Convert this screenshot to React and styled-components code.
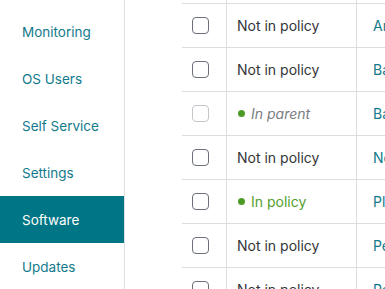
import React from "react";
import styled, { createGlobalStyle } from "styled-components";

const Global = createGlobalStyle`
  html, body { margin: 0; padding: 0; background: #fff; }
  body { font-family: Inter, "Noto Sans", sans-serif; overflow: hidden; }
  * { box-sizing: border-box; }
`;

const Page = styled.div`
  display: flex;
  height: 289px;
  width: 385px;
  overflow: hidden;
`;

const Sidebar = styled.nav`
  flex: 0 0 125px;
  border-right: 1px solid #dfe0e3;
  padding-top: 8px;
  display: flex;
  flex-direction: column;
`;

const NavItem = styled.div`
  height: 47px;
  flex: 0 0 47px;
  display: flex;
  align-items: center;
  padding-left: 22px;
  font-size: 13.5px;
  color: ${(p) => (p.$active ? "#ffffff" : "#137a8b")};
  background: ${(p) => (p.$active ? "#007585" : "transparent")};
`;

const Main = styled.main`
  flex: 1;
  padding-left: 57px;
  overflow: hidden;
`;

const Table = styled.div`
  display: grid;
  grid-template-columns: 45px 130px 120px;
  width: 295px;
`;

const Cell = styled.div`
  height: ${(p) => (p.$top ? "4px" : "44px")};
  border-bottom: 1px solid #dcdde1;
  border-right: ${(p) => (p.$last ? "none" : "1px solid #dcdde1")};
  display: flex;
  align-items: center;
  font-size: 14px;
  white-space: nowrap;
  overflow: hidden;
`;

const CheckCell = styled(Cell)`
  justify-content: flex-start;
  padding-left: 10px;
`;

const StatusCell = styled(Cell)`
  padding-left: 10px;
  color: ${(p) =>
    p.$kind === "policy" ? "#55a02c" : p.$kind === "parent" ? "#7a7c82" : "#333538"};
  font-style: ${(p) => (p.$kind === "parent" ? "italic" : "normal")};
`;

const NameCell = styled(Cell)`
  padding-left: 16px;
  color: #137a8b;
`;

const Box = styled.span`
  width: 17px;
  height: 17px;
  border-radius: 4px;
  border: 1.5px solid ${(p) => (p.$disabled ? "#c4c6cc" : "#6b7079")};
  background: #fff;
`;

const Dot = styled.span`
  width: 7px;
  height: 7px;
  border-radius: 50%;
  background: #4f9a26;
  margin: 0 6px 0 1px;
`;

const nav = ["Monitoring", "OS Users", "Self Service", "Settings", "Software", "Updates"];

const rows = [
  { status: "none", name: "Arduino IDE" },
  { status: "none", name: "Balsamiq" },
  { status: "parent", name: "Backblaze" },
  { status: "none", name: "Notion" },
  { status: "policy", name: "Plex" },
  { status: "none", name: "Pencil" },
  { status: "none", name: "Postman" },
];

const label = { none: "Not in policy", parent: "In parent", policy: "In policy" };

export default function App() {
  return (
    <>
      <Global />
      <Page>
        <Sidebar>
          {nav.map((n) => (
            <NavItem key={n} $active={n === "Software"}>
              {n}
            </NavItem>
          ))}
        </Sidebar>
        <Main>
          <Table>
            <Cell $top />
            <Cell $top />
            <Cell $top $last />
            {rows.map((r, i) => (
              <React.Fragment key={i}>
                <CheckCell>
                  <Box $disabled={r.status === "parent"} />
                </CheckCell>
                <StatusCell $kind={r.status}>
                  {r.status !== "none" && <Dot />}
                  {label[r.status]}
                </StatusCell>
                <NameCell $last>{r.name}</NameCell>
              </React.Fragment>
            ))}
          </Table>
        </Main>
      </Page>
    </>
  );
}
